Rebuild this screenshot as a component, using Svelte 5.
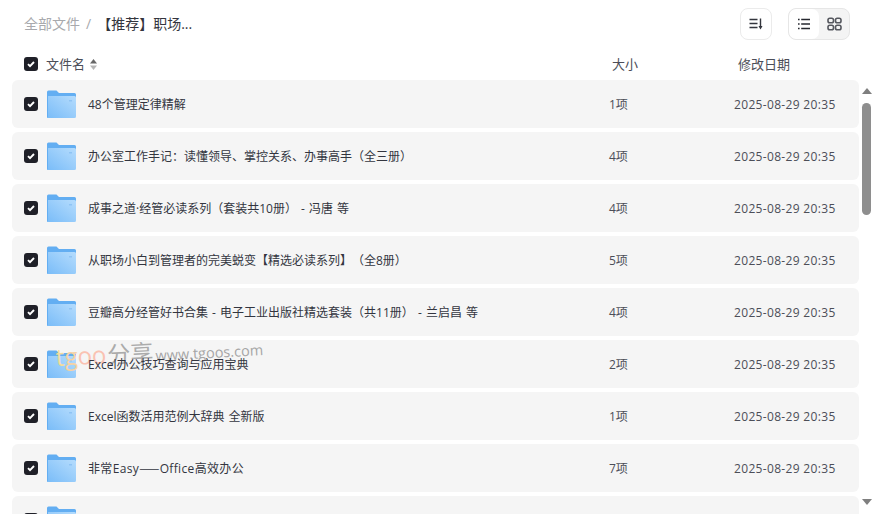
<script>
  const rows = [
    ['48个管理定律精解', '1项'],
    ['办公室工作手记：读懂领导、掌控关系、办事高手（全三册）', '4项'],
    ['成事之道·经管必读系列（套装共10册） - 冯唐 等', '4项'],
    ['从职场小白到管理者的完美蜕变【精选必读系列】（全8册）', '5项'],
    ['豆瓣高分经管好书合集 - 电子工业出版社精选套装（共11册） - 兰启昌 等', '4项'],
    ['Excel办公技巧查询与应用宝典', '2项'],
    ['Excel函数活用范例大辞典 全新版', '1项'],
    ['非常Easy——Office高效办公', '7项'],
    ['', '']
  ];
</script>

{#snippet check()}
  <span class="check">
    <svg width="14" height="14" viewBox="0 0 14 14"><path d="M4 7.200 6 9.200l4-4.200" fill="none" stroke="#fff" stroke-width="1.900"/></svg>
  </span>
{/snippet}

<div class="page">
  <header class="top">
    <nav class="crumbs">
      <span class="root">全部文件</span>
      <span class="slash">/</span>
      <span class="current">【推荐】职场...</span>
    </nav>
    <div class="tools">
      <button class="btn sort" aria-label="排序">
        <svg width="16" height="16" viewBox="0 0 16 16" fill="none" stroke="#33353d" stroke-width="1.400">
          <path d="M1.500 3.500h8M1.500 7.500h8M1.500 11.500h8M12.500 2.500v9"/>
          <path d="M10.500 10h4l-2 3.500z" fill="#33353d" stroke="none"/>
        </svg>
      </button>
      <div class="switch">
        <button class="seg on" aria-label="列表">
          <svg width="14" height="14" viewBox="0 0 14 14" fill="none" stroke="#26282f" stroke-width="1.300">
            <path d="M1 2.500h1.600M1 7h1.600M1 11.500h1.600M4.200 2.500H13M4.200 7H13M4.200 11.500H13"/>
          </svg>
        </button>
        <button class="seg" aria-label="网格">
          <svg width="15" height="14" viewBox="0 0 15 14" fill="none" stroke="#55575e" stroke-width="1.600">
            <rect x="1" y="1.200" width="5.500" height="4.600" rx="1.800"/><rect x="8.500" y="1.200" width="5.500" height="4.600" rx="1.800"/>
            <rect x="1" y="8.200" width="5.500" height="4.600" rx="1.800"/><rect x="8.500" y="8.200" width="5.500" height="4.600" rx="1.800"/>
          </svg>
        </button>
      </div>
    </div>
  </header>

  <div class="thead">
    <div class="col-name">
      {@render check()}
      <span class="label">文件名</span>
      <svg class="sorter" width="7" height="11" viewBox="0 0 7 11"><path d="M3.500 0 7 4.500H0z" fill="#666"/><path d="M3.500 11 0 6.500h7z" fill="#b5b5b5"/></svg>
    </div>
    <span class="col-size">大小</span>
    <span class="col-date">修改日期</span>
  </div>

  <div class="body">
    <div class="list">
      {#each rows as r}
        <div class="row">
          {@render check()}
          <svg class="folder" width="30" height="28" viewBox="0 0 30 28">
            <defs>
              <linearGradient id="fg" x1="0" y1="1" x2="1" y2="0">
                <stop offset="0" stop-color="#79bcf8"/><stop offset="1" stop-color="#b5dcfd"/>
              </linearGradient>
            </defs>
            <path d="M1 2a1.500 1.500 0 0 1 1.500-1.500h8L13 3h15.500A1.500 1.500 0 0 1 30 4.500V9H1z" fill="#63aef2"/>
            <path d="M1 6h27.500A1.500 1.500 0 0 1 30 7.500v19a1.500 1.500 0 0 1-1.500 1.500h-26A1.500 1.500 0 0 1 1 26.500z" fill="url(#fg)"/>
            <path d="M1 6h1v22H2.500A1.500 1.500 0 0 1 1 26.500z" fill="#63aef2"/>
            <rect x="23" y="10" width="3" height="1.500" fill="#8fc4f4"/>
          </svg>
          <span class="name" class:wide={r[0].includes('——')}>
            {#each r[0].split('——') as part, i}{#if i > 0}<span class="dash">——</span>{/if}{part}{/each}
          </span>
          <span class="size">{r[1]}</span>
          {#if r[0]}<span class="date">2025-08-29 20:35</span>{/if}
        </div>
      {/each}
      <div class="mark" aria-hidden="true">
        <span class="mt">t</span><span class="mg">g</span><span class="mo">oo</span><span class="mz">分享</span><span class="mu">www.tgoos.com</span>
      </div>
    </div>
    <div class="bar">
      <i class="up"></i>
      <i class="thumb"></i>
      <i class="down"></i>
    </div>
  </div>
</div>

<style>
  :global(body) { margin: 0; background: #fff; overflow: hidden; }
  .page {
    width: 874px; height: 514px; overflow: hidden; display: flex; flex-direction: column;
    font-family: "Open Sans", "Noto Sans CJK SC", sans-serif; font-size: 12px; color: #33353f;
    text-spacing-trim: space-all;
  }
  .top { height: 48px; flex: none; display: flex; align-items: center; justify-content: space-between; padding: 0 24px; }
  .crumbs { display: flex; align-items: center; font-size: 14px; margin-top: -2px; }
  .root { color: #a8a9ad; }
  .slash { color: #a8a9ad; margin: 0 6px; }
  .current { color: #33353d; }
  .tools { display: flex; gap: 16px; }
  .btn { width: 32px; height: 32px; box-sizing: border-box; padding: 0; border: 1px solid #ebebeb; border-radius: 8px; background: #fff; display: flex; align-items: center; justify-content: center; }
  .switch { width: 62px; height: 32px; box-sizing: border-box; border: 1px solid #e6e6e6; border-radius: 8px; background: #f4f4f4; display: flex; overflow: hidden; }
  .seg { width: 30px; padding: 0; border: 0; background: transparent; display: flex; align-items: center; justify-content: center; }
  .seg.on { background: #fff; border-radius: 7px; }
  .thead { height: 32px; flex: none; display: flex; align-items: center; font-size: 13px; color: #4c4e58; }
  .col-name { display: flex; align-items: center; padding-left: 24px; width: 612px; box-sizing: border-box; }
  .label { margin-left: 8px; margin-bottom: 2px; }
  .sorter { margin-left: 5px; }
  .col-size { width: 126px; margin-bottom: 2px; }
  .col-date { margin-bottom: 2px; }
  .check { width: 14px; height: 14px; flex: none; border-radius: 3px; background: #1f2028; display: block; }
  .check svg { display: block; }
  .body { flex: 1; min-height: 0; display: flex; }
  .list { width: 847px; margin-left: 12px; display: flex; flex-direction: column; gap: 4px; position: relative; flex: none; }
  .row { height: 48px; flex: none; background: #f5f5f5; border-radius: 6px; display: flex; align-items: center; padding-left: 12px; }
  .folder { margin-left: 8px; flex: none; }
  .name { margin-left: 12px; width: 521px; flex: none; white-space: nowrap; word-spacing: 1px; position: relative; z-index: 1; }
  .name.wide { letter-spacing: .35px; }
  .dash { font-family: "Noto Sans CJK SC", sans-serif; }
  .size { width: 125px; flex: none; color: #4c4e58; }
  .date { color: #4c4e58; white-space: nowrap; letter-spacing: .33px; }
  .bar { width: 15px; display: flex; flex-direction: column; align-items: center; position: relative; }
  .up { margin-top: 8px; width: 0; height: 0; border: 5px solid transparent; border-top: 0; border-bottom: 6px solid #7f7f7f; }
  .thumb { margin-top: 9px; width: 9px; height: 112px; border-radius: 5px; background: #8e8e8e; }
  .down { margin-top: 284px; width: 0; height: 0; border: 5px solid transparent; border-bottom: 0; border-top: 6px solid #7f7f7f; }
  .mark { position: absolute; left: 44px; top: 262px; transform: rotate(-3deg); transform-origin: left center; white-space: nowrap; display: flex; align-items: baseline; pointer-events: none; line-height: 30px; }
  .mt, .mg, .mo { font-size: 24px; }
  .mt { color: #f3dd9c; }
  .mg { color: #f6d2a6; }
  .mo { color: #fac2b2; }
  .mz { font-size: 23px; color: #ababab; margin-left: 1px; }
  .mu { font-size: 14.500px; color: #a6a6a6; margin-left: 2px; }
</style>
